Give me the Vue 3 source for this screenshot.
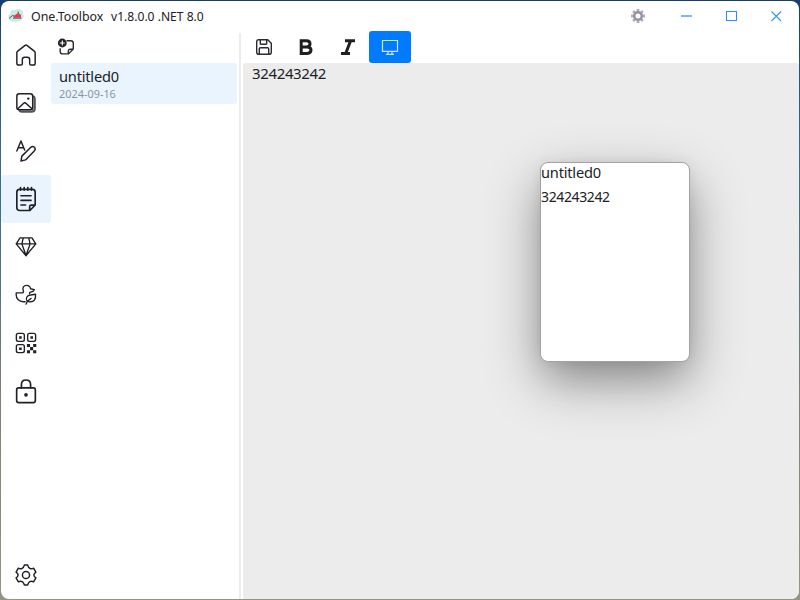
<script setup>
const notes = [{ title: 'untitled0', date: '2024-09-16', body: '324243242' }]
const current = notes[0]
</script>

<template>
  <div class="desktop">
    <div class="window">
      <header class="titlebar">
        <svg class="logo" width="16" height="16" viewBox="0 0 16 16">
          <path d="M3 3Q4 1 7 2Q11 0 13 2Q16 3 15 6Q17 9 14 11Q13 14 10 13Q7 15 4 13Q0 13 1 10Q-1 7 2 6Z" fill="#c8ebe2" />
          <path d="M1 10.5L4.5 7.5L6 8M10 3.5L10.5 6" fill="none" stroke="#48545b" stroke-width="1" />
          <path d="M5.5 8.3L9 5.5H11L13 7V9.8H5.5Z" fill="#e43c50" />
          <path d="M5 10.2H13.5" stroke="#6b5563" stroke-width="1" />
        </svg>
        <span class="app-name">One.Toolbox</span>
        <span class="version">v1.8.0.0 .NET 8.0</span>
        <div class="window-actions">
          <svg class="gear" width="14" height="14" viewBox="0 0 14 14">
            <g stroke="#b5adbf" stroke-width="2.8">
              <path d="M7 0V14M0 7H14M2.1 2.1L11.9 11.9M11.9 2.1L2.1 11.9" />
            </g>
            <circle cx="7" cy="7" r="3.7" fill="#fff" stroke="#9a90a6" stroke-width="2.4" />
          </svg>
          <svg class="ctl" width="45" height="30" viewBox="0 0 45 30"><path d="M17 15H28" stroke="#7ab7ff" stroke-width="2" /></svg>
          <svg class="ctl" width="45" height="30" viewBox="0 0 45 30"><path d="M17.5 10.5H27.5V19.5H17.5Z" fill="none" stroke="#2b8eff" stroke-width="1.1" /></svg>
          <svg class="ctl" width="45" height="30" viewBox="0 0 45 30"><path d="M17.5 10.5L27 20M27 10.5L17.5 20" stroke="#3292ff" stroke-width="1.1" /></svg>
        </div>
      </header>

      <main class="content">
        <nav class="nav">
          <div class="nav-item">
            <svg class="line home" viewBox="0 0 24 24"><path d="M4 23H6.5Q8 23 8 21.5V17Q8 14.5 10.5 14.5H13.5Q16 14.5 16 17V21.5Q16 23 17.5 23H20Q22 23 22 21V9.5Q22 8.5 21 7.8L13 1.5Q12 .8 11 1.5L3 7.8Q2 8.5 2 9.5V21Q2 23 4 23Z" /></svg>
          </div>
          <div class="nav-item">
            <svg class="line" viewBox="0 0 24 24">
              <path d="M20.5 5Q21.5 6 21.5 8V18Q21.5 21.5 18 21.5H8Q6 21.5 5 20.5" stroke="#55565b" stroke-width="2.4" />
              <rect x="2" y="2" width="17.3" height="17.3" rx="2.5" fill="#fff" />
              <path d="M3 18.3L9.2 12.5Q10.7 11.2 12.2 12.5L18.5 18.3" />
              <circle cx="14.5" cy="7.2" r="1.3" fill="#202126" stroke="none" />
            </svg>
          </div>
          <div class="nav-item">
            <svg class="line" viewBox="0 0 24 24">
              <path d="M2 12L6.5 1L10.5 11M3.7 8.5H9.5M6.5 23L7.5 17.6L17 8.2Q19.2 6.2 21.1 8Q23 10 21 12L11.5 21.7Z" />
            </svg>
          </div>
          <div class="nav-item active">
            <svg class="line note-icon" viewBox="0 0 24 28">
              <path d="M5 3.5H19Q22 3.5 22 6.5V20.5L16.3 26.5H5Q2 26.5 2 23.5V6.5Q2 3.5 5 3.5ZM6 1.4V4.5M10 1.4V4.5M14 1.4V4.5M18 1.4V4.5M6.5 10.5H17.5M6.5 15.5H17.5M6.5 20.5H11.5M16 26V22.5Q16 20.7 17.8 20.7H21.7" />
            </svg>
          </div>
          <div class="nav-item">
            <svg class="line small" viewBox="0 0 24 24"><path d="M5.5 2H18.5L22.7 8.6L12 21.5L1.3 8.6ZM1.5 8.6H22.5M9 2L7.5 8.6L12 21.2L16.5 8.6L15 2" /></svg>
          </div>
          <div class="nav-item">
            <svg class="line small" viewBox="0 0 24 24">
              <path d="M11 19.3H9C4.6 19.3 1.3 16.2 1.3 12V9.7H7.2Q10 9.7 9 7C7.7 4 9.7 1.5 12.6 1.5C15 1.5 16.6 2.9 17 5.2L21 6.2Q20.2 8.6 17 8.8Q15.6 9 16 10.8" />
              <path d="M13.3 19C11 16 13 12.3 17 12L22.4 11.2C22.9 16.4 20.8 19.4 17 19.4Q15 19.6 13.3 19M12 22Q13 18.6 17.5 15.7" />
            </svg>
          </div>
          <div class="nav-item">
            <svg class="line small" viewBox="0 0 24 24">
              <rect x="1.5" y="1.5" width="8.7" height="8.7" rx="2" />
              <rect x="13.8" y="1.5" width="8.7" height="8.7" rx="2" />
              <rect x="1.5" y="13.8" width="8.7" height="8.7" rx="2" />
              <path d="M4.5 4.5h2.8v2.8H4.5ZM16.8 4.5h2.8v2.8h-2.8ZM4.5 16.8h2.8v2.8H4.5ZM13 13h3.4v3.4H13ZM19.8 13h3.4v3.4h-3.4ZM16.4 16.4h3.4v3.4h-3.4ZM13 19.8h3.4v3.4H13ZM19.8 19.8h3.4v3.4h-3.4Z" fill="#202126" stroke="none" />
            </svg>
          </div>
          <div class="nav-item">
            <svg class="line lock" viewBox="0 0 24 28">
              <rect x="1.8" y="10.6" width="20.4" height="16" rx="2.2" /><path d="M7 10.6V7Q7 2 12 2T17 7V10.6" /><circle cx="12" cy="18.3" r="2" fill="#202126" stroke="none" />
            </svg>
          </div>
          <div class="nav-item settings">
            <svg class="line" viewBox="0 0 24 24">
              <path d="M10.2 1.2H13.8Q14.5 3.8 16.2 4.8T20.3 4.6L22.8 8.8Q20.6 10.4 20.6 12T22.8 15.2L20.3 19.4Q17.9 18.2 16.2 19.2T13.8 22.8H10.2Q9.5 20.2 7.8 19.2T3.7 19.4L1.2 15.2Q3.4 13.6 3.4 12T1.2 8.8L3.7 4.6Q6.1 5.8 7.8 4.8T10.2 1.2Z" />
              <circle cx="12" cy="12" r="3.9" />
            </svg>
          </div>
        </nav>

        <section class="note-list">
          <div class="list-tools">
            <svg width="18" height="18" viewBox="0 0 18 18">
              <path d="M9.5 2.8H13.7Q16.3 2.8 16.3 5.5V11L11.6 15.9H5.5Q3.2 15.9 3.2 13.5V10.2M11.3 15.5V13Q11.3 11.2 13 11.2H16" fill="none" stroke="#292a2e" stroke-width="1.4" />
              <circle cx="5.3" cy="5" r="4.4" fill="#202126" /><path d="M5.3 2.5V7.5M2.8 5H7.8" stroke="#fff" stroke-width="1.1" />
            </svg>
          </div>
          <article v-for="note in notes" :key="note.title" class="note">
            <div class="note-title">{{ note.title }}</div>
            <div class="note-date">{{ note.date }}</div>
          </article>
        </section>

        <div class="splitter"></div>

        <section class="editor">
          <div class="toolbar">
            <div class="tool">
              <svg width="18" height="18" viewBox="0 0 18 18"><path d="M3.3 1.7H12.7L16.3 5.3V14.2Q16.3 16.3 14.2 16.3H3.8Q1.7 16.3 1.7 14.2V3.5Q1.7 1.7 3.3 1.7ZM5.3 2V5.5Q5.3 6.3 6.2 6.3H10.8Q11.7 6.3 11.7 5.5V2M4.3 16V10.8Q4.3 9.7 5.5 9.7H12.5Q13.7 9.7 13.7 10.8V16" fill="none" stroke="#292b30" stroke-width="1.4" /></svg>
            </div>
            <div class="tool">
              <svg width="18" height="18" viewBox="0 0 18 18"><path d="M4.2 2.8H9.5Q13 2.8 13 5.8T9.5 8.9H4.2ZM4.2 8.9H10.2Q14 8.9 14 12.1T10.2 15.4H4.2Z" fill="none" stroke="#1d1f23" stroke-width="3" /></svg>
            </div>
            <div class="tool">
              <svg width="18" height="18" viewBox="0 0 18 18"><path d="M6 2.7H16M2 15.5H11M11.6 2.7L6.7 15.5" fill="none" stroke="#1d1f23" stroke-width="3" /></svg>
            </div>
            <div class="tool primary">
              <svg width="18" height="18" viewBox="0 0 18 18"><path d="M1.5 2.5H16.5V13.3H1.5ZM7 13.5V16M11 13.5V16M5 16.3H13" fill="none" stroke="#cce5ff" stroke-width="1.2" /></svg>
            </div>
          </div>
          <div class="document">{{ current.body }}</div>
        </section>
      </main>
    </div>

    <aside class="sticky">
      <div class="sticky-title">{{ current.title }}</div>
      <div class="sticky-body">{{ current.body }}</div>
    </aside>
  </div>
</template>

<style>
body { margin: 0; overflow: hidden; }
</style>

<style scoped>
* { box-sizing: border-box; }
.desktop {
  position: relative;
  width: 800px;
  height: 600px;
  padding: 1px;
  background: linear-gradient(180deg, #173d6b 0, #326b8c 24%, #4f7384 45%, #7b8173 65%, #929681 100%);
  color: #202126;
  font-family: "Noto Sans", "Open Sans", sans-serif;
}
.window {
  display: flex;
  flex-direction: column;
  height: 598px;
  overflow: hidden;
  border-radius: 8px;
  background: #fff;
}
.titlebar { display: flex; flex: 0 0 30px; height: 30px; align-items: center; padding-left: 7px; line-height: 28px; }
.logo { margin-right: 7px; }
.app-name, .version { padding-top: 2px; }
.app-name { width: 80px; font-size: 12.4px; }
.version { font-size: 12.1px; }
.window-actions { display: flex; align-items: center; margin-left: auto; }
.gear { margin-right: 19px; }
.content { display: flex; flex: 1; min-height: 0; }
.nav { display: flex; flex: 0 0 50px; flex-direction: column; }
.nav-item { display: flex; flex: 0 0 48px; align-items: center; justify-content: center; border-radius: 3px; }
.nav-item.active { background: #e9f4ff; }
.settings { margin-top: auto; }
.line { width: 22px; height: 22px; fill: none; stroke: #202126; stroke-width: 1.6; stroke-linecap: round; stroke-linejoin: round; }
.home { height: 24px; }
.note-icon, .lock { height: 26px; stroke-width: 1.8; }
.small { width: 22px; height: 22px; stroke-width: 1.5; }
.note-list { flex: 0 0 188px; padding-right: 2px; }
.list-tools { display: flex; align-items: center; height: 32px; padding-left: 6px; }
.note { height: 41px; padding: 3px 8px; border-radius: 3px; background: #e9f4ff; }
.note-title { font-size: 14.6px; letter-spacing: -0.2px; line-height: 20px; }
.note-date { margin-top: 1px; color: #8c959d; font-size: 10.9px; line-height: 13px; }
.splitter { flex: 0 0 2px; margin: 2px 2px 0 0; background: #ececec; }
.editor { display: flex; flex: 1; flex-direction: column; }
.toolbar { display: flex; flex: 0 0 32px; }
.tool { display: flex; width: 42px; align-items: center; justify-content: center; }
.primary { border-radius: 3px; background: #007aff; }
.document { flex: 1; padding: 0 9px; border-radius: 3px 3px 0 0; background: #ececec; font-size: 15px; letter-spacing: -0.36px; line-height: 21px; }
.sticky {
  position: absolute;
  left: 540px;
  top: 162px;
  width: 150px;
  height: 200px;
  border: 1px solid #a2a2a2;
  border-radius: 8px;
  background: #fff;
  box-shadow: 0 20px 56px rgba(0, 0, 0, 0.32), 0 18px 36px -6px rgba(0, 0, 0, 0.18), 0 0 12px rgba(0, 0, 0, 0.06);
}
.sticky-title { font-size: 14.6px; letter-spacing: -0.2px; line-height: 18px; }
.sticky-body { margin-top: 6px; font-size: 14px; letter-spacing: -0.38px; line-height: 20px; }
</style>
